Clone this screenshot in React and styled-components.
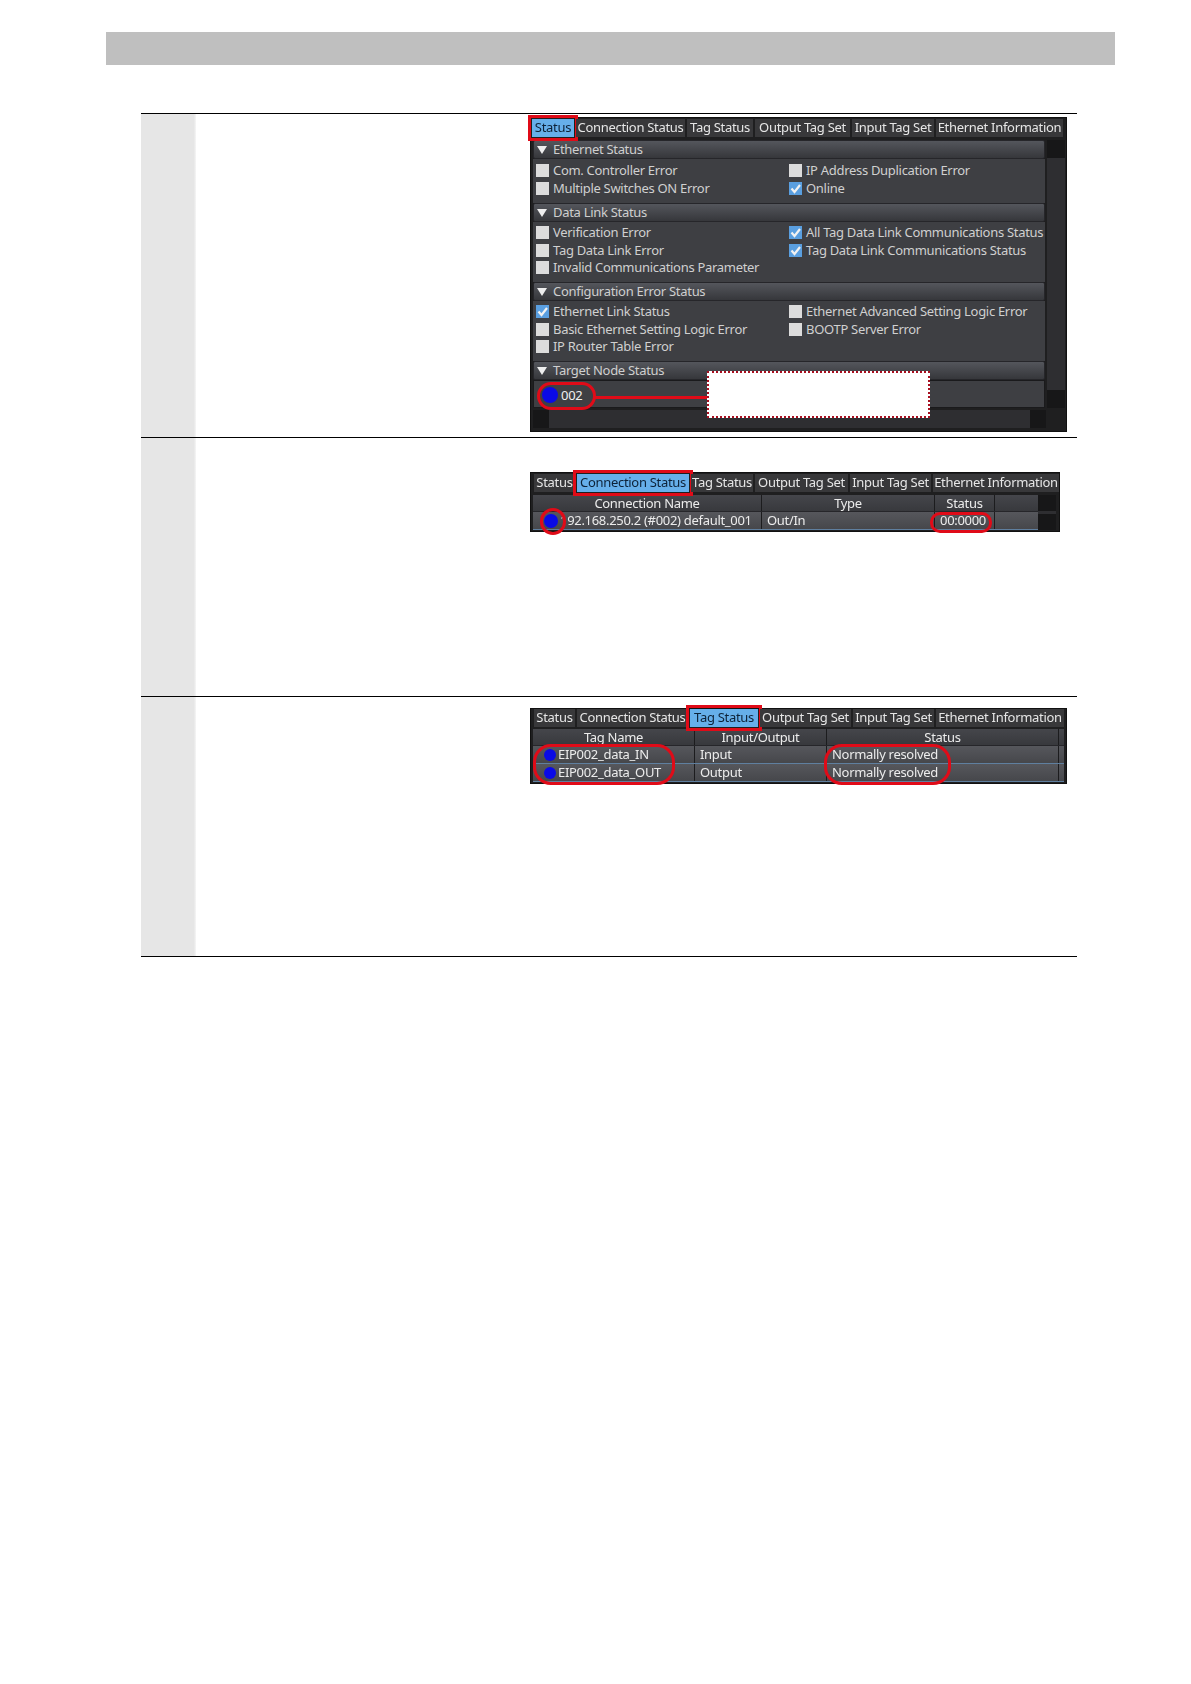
import React from "react";
import styled, { createGlobalStyle } from "styled-components";

const Global = createGlobalStyle`
  * { box-sizing: border-box; }
  body { margin: 0; background: #fff; font-family: "Noto Sans", "Liberation Sans", sans-serif; }
`;

const Page = styled.div`
  width: 1191px;
  height: 1684px;
  padding: 32px 76px 0 106px;
`;

const TopBar = styled.div`
  height: 33px;
  background: #bfbfbf;
  margin-bottom: 48px;
`;

const Table = styled.div`
  margin-left: 35px;
  width: 936px;
  border-top: 1px solid #000;
`;

const Row = styled.div`
  display: grid;
  grid-template-columns: 55px 1fr;
  height: ${p => p.$h}px;
  border-bottom: 1px solid #000;
`;

const StepCell = styled.div`
  background: linear-gradient(90deg, #e6e6e6 96%, #f6f6f6);
`;

const Body = styled.div`
  padding: ${p => p.$top}px 0 0 334px;
`;

const Panel = styled.div`
  position: relative;
  width: ${p => p.$w}px;
  height: ${p => p.$h}px;
  background: #1f1f20;
  border: 1px solid #111;
  color: #e2e2e2;
  font-size: 13px;
  line-height: 17px;
  letter-spacing: -0.3px;
  filter: blur(0.45px);
`;

const Tabs = styled.div`
  display: flex;
  gap: 2px;
  height: ${p => p.$h}px;
  padding: ${p => p.$pt}px 0 0 ${p => p.$left}px;
  white-space: nowrap;
`;

const Tab = styled.div`
  position: relative;
  z-index: 1;
  flex: none;
  width: ${p => p.$w}px;
  height: 18px;
  line-height: 17px;
  text-align: center;
  background: ${p => (p.$on ? "#66afea" : "#38383a")};
  color: ${p => (p.$on ? "#0d2238" : "#e6e6e6")};
  outline: ${p => (p.$on ? "3px solid #e00b18" : "none")};
  outline-offset: 1px;
`;

const Main = styled.div`
  display: flex;
  gap: 2px;
  padding-left: 2px;
`;

const Sections = styled.div`
  width: 512px;
`;

const SectionHead = styled.div`
  display: flex;
  align-items: center;
  gap: 6px;
  height: 19px;
  padding-left: 3px;
  background: linear-gradient(#54565c, #36373b);
  border: 1px solid #26262a;
  border-radius: 2px;
  color: #cfcfcf;
`;

const Arrow = styled.span`
  width: 0;
  height: 0;
  border-left: 5px solid transparent;
  border-right: 5px solid transparent;
  border-top: 8px solid #eee;
`;

const Checks = styled.div`
  display: grid;
  grid-template-columns: 253px 1fr;
  grid-auto-rows: 17.5px;
  height: ${p => p.$h}px;
  padding: ${p => p.$pt}px 0 0 3px;
  background: #3e3f43;
`;

const Check = styled.div`
  display: flex;
  align-items: center;
  gap: 4px;
  white-space: nowrap;
  color: #d0d0d0;
`;

const Box = styled.span`
  flex: none;
  display: flex;
  width: 13px;
  height: 13px;
  background: ${p => (p.$on ? "#5a9fe0" : "#dcdcdc")};
`;

const NodeRow = styled.div`
  display: flex;
  align-items: center;
  height: 28px;
  padding: 2px 0 0 8px;
  gap: 3px;
  background: #3e3f43;
  border: 1px solid #1a1a1c;
  color: #f0f0f0;
`;

const Dot = styled.span`
  flex: none;
  width: ${p => p.$d}px;
  height: ${p => p.$d}px;
  border-radius: 50%;
  background: #0a0ae6;
`;

const VScroll = styled.div`
  display: flex;
  flex-direction: column;
  justify-content: space-between;
  width: ${p => p.$w}px;
  background: #2e2e31;
`;

const ScrollBtn = styled.div`
  height: ${p => p.$h}px;
  background: #171718;
`;

const HScroll = styled.div`
  display: flex;
  justify-content: space-between;
  height: 18px;
  margin: 2px 20px 0 2px;
  background: #2e2e31;
`;

const HBtn = styled.div`
  width: 16px;
  background: #171718;
`;

const Grid = styled.div`
  display: flex;
  padding-left: 2px;
`;

const GridBody = styled.div`
  width: ${p => p.$w}px;
`;

const GridRow = styled.div`
  display: flex;
  height: ${p => p.$h}px;
  background: ${p => (p.$head ? "linear-gradient(#45464b, #38393d)" : "linear-gradient(#56575c, #46474b)")};
  border-bottom: 1px solid ${p => (p.$head ? "#26262a" : "#5f7f9f")};
  color: #ececec;
`;

const GridCell = styled.div`
  display: flex;
  align-items: center;
  justify-content: ${p => (p.$head ? "center" : "flex-start")};
  gap: ${p => p.$gap || 0}px;
  width: ${p => p.$w}px;
  padding-left: ${p => p.$pad || 0}px;
  white-space: nowrap;
  border-left: ${p => (p.$first ? "none" : "1px solid #1c1c1e")};
`;

const Ring = styled.div`
  position: absolute;
  z-index: 2;
  left: ${p => p.$x}px;
  top: ${p => p.$y}px;
  width: ${p => p.$w}px;
  height: ${p => p.$h}px;
  border: 3.5px solid #e00b18;
  border-radius: ${p => p.$r}px;
`;

const Connector = styled.div`
  position: absolute;
  z-index: 2;
  left: 63px;
  top: 278px;
  width: 114px;
  height: 3px;
  background: #e00b18;
`;

const Callout = styled.div`
  position: absolute;
  z-index: 3;
  left: 176px;
  top: 253px;
  width: 223px;
  height: 47px;
  background: #fff;
  border: 2px dotted #a81020;
`;

const Tick = () => (
  <svg width="13" height="13" viewBox="0 0 13 13">
    <path d="M2.5 6.5 L5.5 10 L11 3" fill="none" stroke="#f2f2f2" strokeWidth="2.2" />
  </svg>
);

const tabNames = ["Status", "Connection Status", "Tag Status", "Output Tag Set", "Input Tag Set", "Ethernet Information"];

function TabStrip({ widths, active, left, pt, h }) {
  return (
    <Tabs $left={left} $pt={pt} $h={h}>
      {tabNames.map((name, i) => (
        <Tab key={name} $w={widths[i]} $on={i === active}>{name}</Tab>
      ))}
    </Tabs>
  );
}

function CheckItem({ label, on }) {
  if (!label) return <span />;
  return (
    <Check>
      <Box $on={on}>{on && <Tick />}</Box>
      {label}
    </Check>
  );
}

const sections = [
  {
    title: "Ethernet Status",
    h: 44,
    pt: 3,
    items: [
      ["Com. Controller Error"], ["IP Address Duplication Error"],
      ["Multiple Switches ON Error"], ["Online", true],
    ],
  },
  {
    title: "Data Link Status",
    h: 60,
    pt: 2,
    items: [
      ["Verification Error"], ["All Tag Data Link Communications Status", true],
      ["Tag Data Link Error"], ["Tag Data Link Communications Status", true],
      ["Invalid Communications Parameter"], [""],
    ],
  },
  {
    title: "Configuration Error Status",
    h: 60,
    pt: 2,
    items: [
      ["Ethernet Link Status", true], ["Ethernet Advanced Setting Logic Error"],
      ["Basic Ethernet Setting Logic Error"], ["BOOTP Server Error"],
      ["IP Router Table Error"], [""],
    ],
  },
];

function StatusPanel() {
  return (
    <Panel $w={537} $h={315}>
      <TabStrip widths={[42, 109, 66, 95, 82, 127]} active={0} left={1} pt={1} h={22} />
      <Main>
        <Sections>
          {sections.map(s => (
            <div key={s.title}>
              <SectionHead><Arrow />{s.title}</SectionHead>
              <Checks $h={s.h} $pt={s.pt}>
                {s.items.map((it, i) => <CheckItem key={i} label={it[0]} on={it[1]} />)}
              </Checks>
            </div>
          ))}
          <SectionHead><Arrow />Target Node Status</SectionHead>
          <NodeRow><Dot $d={16} />002</NodeRow>
        </Sections>
        <VScroll $w={18}>
          <ScrollBtn $h={18} />
          <ScrollBtn $h={18} />
        </VScroll>
      </Main>
      <HScroll><HBtn /><HBtn /></HScroll>
      <Ring $x={6} $y={264} $w={59} $h={28} $r={14} />
      <Connector />
      <Callout />
    </Panel>
  );
}

function ConnectionPanel() {
  return (
    <Panel $w={530} $h={60}>
      <TabStrip widths={[41, 112, 62, 93, 81, 126]} active={1} left={3} pt={1} h={22} />
      <Grid>
        <GridBody $w={505}>
          <GridRow $head $h={17}>
            <GridCell $head $first $w={228}>Connection Name</GridCell>
            <GridCell $head $w={173}>Type</GridCell>
            <GridCell $head $w={60}>Status</GridCell>
            <GridCell $head $w={44} />
          </GridRow>
          <GridRow $h={18}>
            <GridCell $first $w={228} $pad={11} $gap={2}><Dot $d={14} />192.168.250.2 (#002) default_001</GridCell>
            <GridCell $w={173} $pad={5}>Out/In</GridCell>
            <GridCell $w={60} $pad={5}>00:0000</GridCell>
            <GridCell $w={44} />
          </GridRow>
        </GridBody>
        <VScroll $w={18}>
          <ScrollBtn $h={16} />
          <ScrollBtn $h={16} />
        </VScroll>
      </Grid>
      <Ring $x={9} $y={35} $w={26} $h={27} $r={13} />
      <Ring $x={399} $y={39} $w={62} $h={21} $r={10} />
    </Panel>
  );
}

function TagPanel() {
  return (
    <Panel $w={537} $h={76}>
      <TabStrip widths={[41, 111, 68, 91, 81, 128]} active={2} left={3} pt={0} h={20} />
      <Grid>
        <GridBody $w={531}>
          <GridRow $head $h={17}>
            <GridCell $head $first $w={161}>Tag Name</GridCell>
            <GridCell $head $w={132}>Input/Output</GridCell>
            <GridCell $head $w={232}>Status</GridCell>
            <GridCell $head $w={6} />
          </GridRow>
          {[["EIP002_data_IN", "Input"], ["EIP002_data_OUT", "Output"]].map(r => (
            <GridRow key={r[0]} $h={18}>
              <GridCell $first $w={161} $pad={11} $gap={2}><Dot $d={12} />{r[0]}</GridCell>
              <GridCell $w={132} $pad={5}>{r[1]}</GridCell>
              <GridCell $w={232} $pad={5}>Normally resolved</GridCell>
              <GridCell $w={6} />
            </GridRow>
          ))}
        </GridBody>
      </Grid>
      <Ring $x={2} $y={35} $w={142} $h={41} $r={18} />
      <Ring $x={293} $y={35} $w={127} $h={41} $r={18} />
    </Panel>
  );
}

export default function App() {
  return (
    <Page>
      <Global />
      <TopBar />
      <Table>
        <Row $h={324}>
          <StepCell />
          <Body $top={3}><StatusPanel /></Body>
        </Row>
        <Row $h={259}>
          <StepCell />
          <Body $top={34}><ConnectionPanel /></Body>
        </Row>
        <Row $h={260}>
          <StepCell />
          <Body $top={11}><TagPanel /></Body>
        </Row>
      </Table>
    </Page>
  );
}
